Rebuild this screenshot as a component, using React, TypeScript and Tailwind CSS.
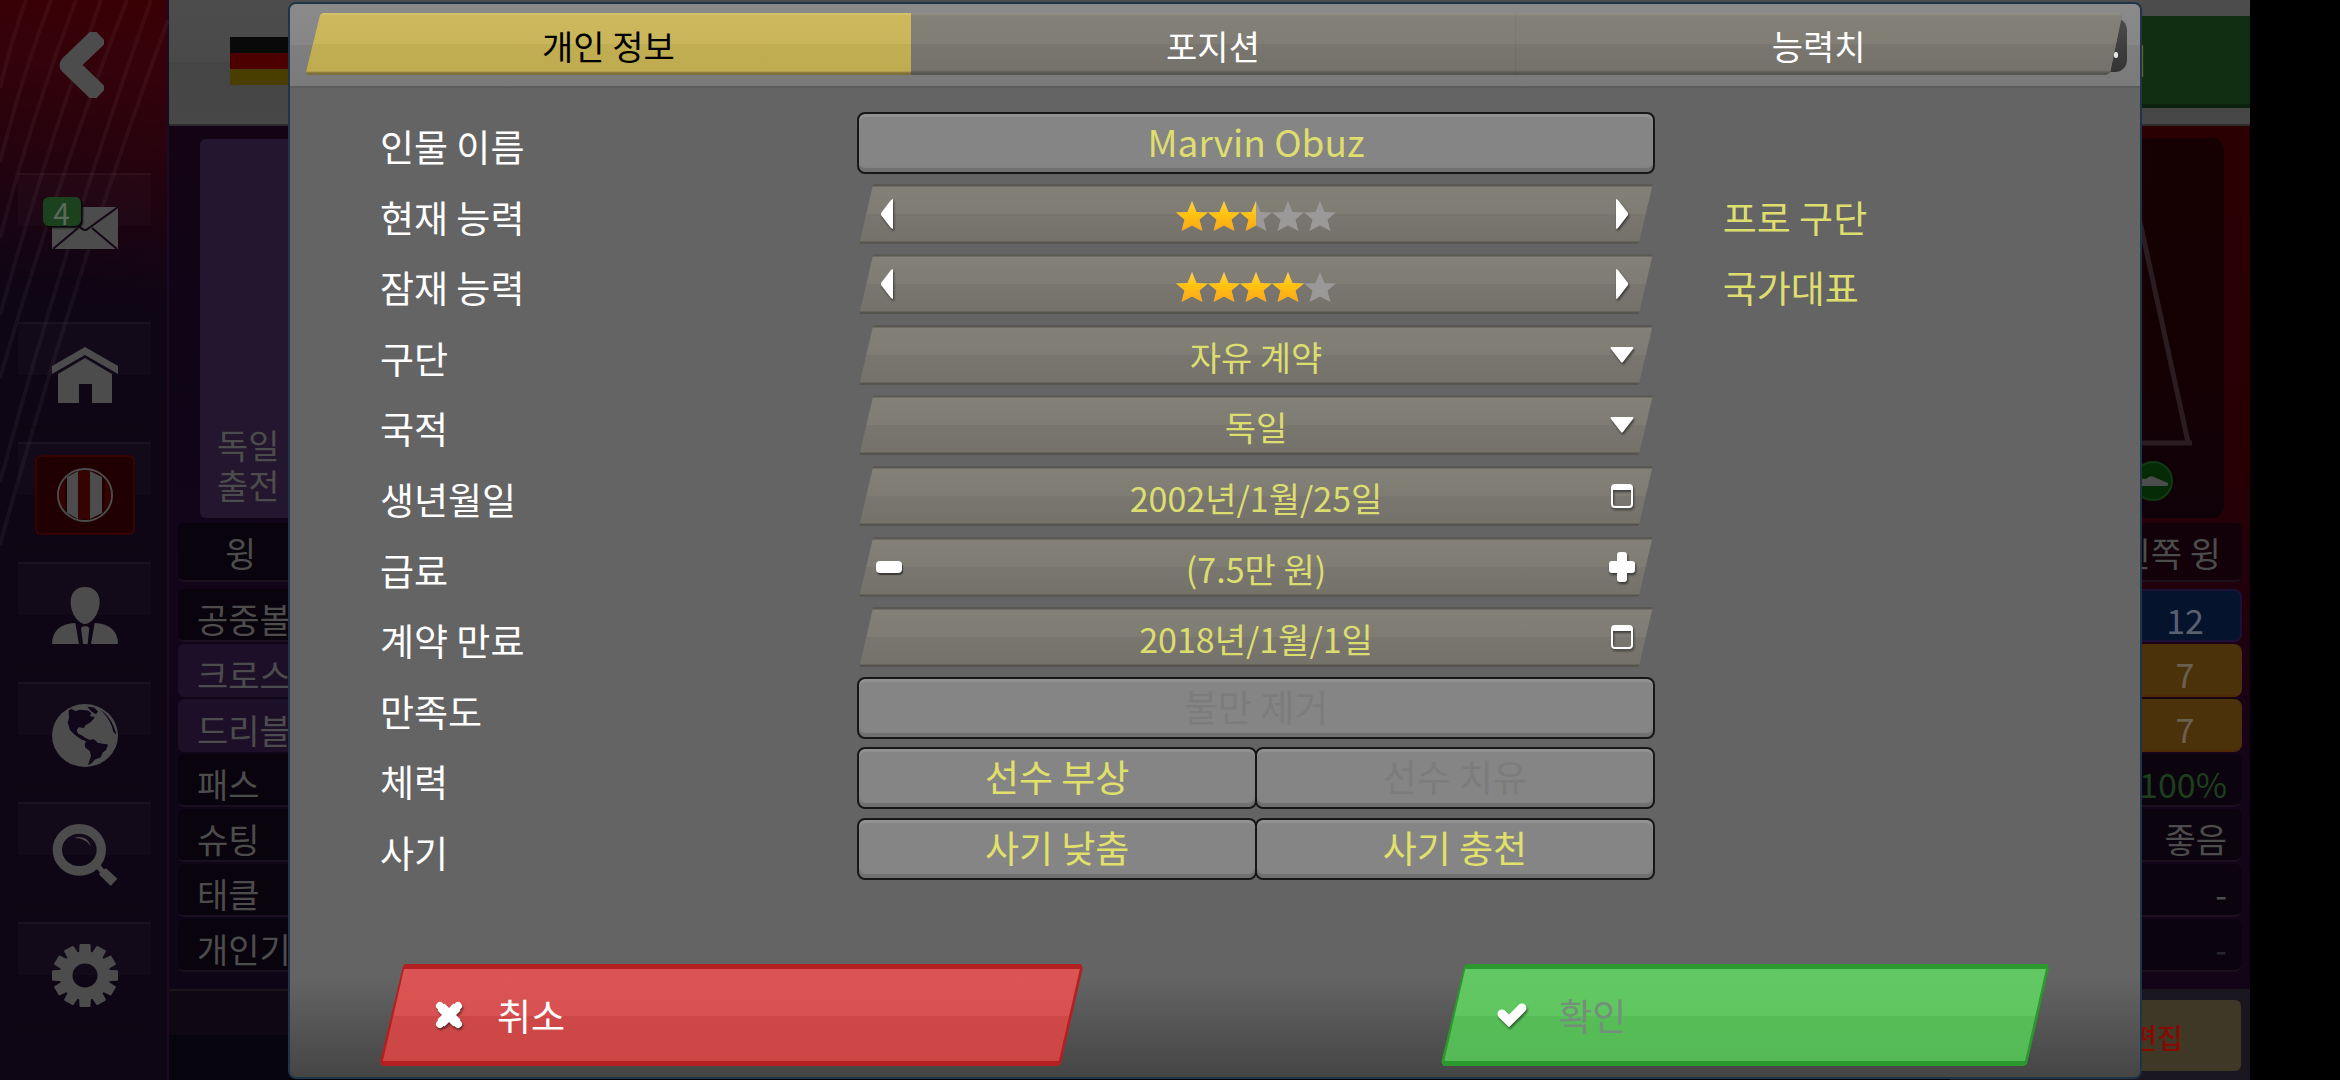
import React, { useId, useState } from "react";

const starPoints =
  "16,0 20.5,11 32,11.5 23.5,18.5 26.5,30 16,24.5 5.5,30 8.5,18.5 0,11.5 11.5,11";

/* ---------- sidebar icons ---------- */

function MailIcon() {
  return (
    <svg viewBox="0 0 66 42" className="h-[42px] w-[66px]" aria-hidden="true">
      <rect width="66" height="42" fill="#4c4c4c" />
      <path d="M0 0 L29 21 Q33 25 37 21 L66 0 M1 42 L26 21 M65 42 L40 21" fill="none" stroke="#150717" strokeWidth="2" />
    </svg>
  );
}

function HomeIcon() {
  return (
    <svg viewBox="0 0 66 56" className="h-[56px] w-[66px]" fill="#4c4c4c" aria-hidden="true">
      <path d="M33 0 L66 19 V27 L33 8 L0 27 V19 Z" />
      <path d="M33 11 L60 27 V56 H40 V37 H27 V56 H6 V27 Z" />
    </svg>
  );
}

function CrestIcon() {
  return (
    <span className="flex h-20 w-[100px] items-center justify-center rounded-md border-2 border-[#360303] bg-[#200000]">
      <svg viewBox="0 0 58 56" className="h-[56px] w-[58px]" aria-hidden="true">
        <ellipse cx="29" cy="28" rx="27" ry="26" fill="#200000" stroke="#4c4c4c" strokeWidth="2" />
        <rect x="22" y="4" width="12" height="48" fill="#360303" />
        <path d="M3 28 Q4 18 9 13 V43 Q4 38 3 28 M55 28 Q54 18 49 13 V43 Q54 38 55 28" fill="#360303" />
        <path d="M11 10 L22 4 V52 L11 46 Z M34 4 L46 10 V46 L34 52 Z" fill="#4c4c4c" />
      </svg>
    </span>
  );
}

function PersonIcon() {
  return (
    <svg viewBox="154 138 198 168" preserveAspectRatio="none" className="h-[57px] w-[66px]" fill="#4c4c4c" aria-hidden="true">
      <path d="M253 138 C281 138 298 156 297 184 C296 216 274 247 253 247 C233 247 210 216 210 184 C209 156 226 138 253 138 Z" />
      <path d="M154 306 C154 268 178 246 224 244 L235 306 Z" />
      <path d="M352 306 C352 268 328 246 282 244 L271 306 Z" />
      <path d="M241 258 L248 254 H259 L266 258 L261 306 H247 Z" />
    </svg>
  );
}

function GlobeIcon() {
  return (
    <svg viewBox="154 470 198 184" preserveAspectRatio="none" className="h-[63px] w-[66px]" aria-hidden="true">
      <ellipse cx="253" cy="562" rx="99" ry="92" fill="#4c4c4c" />
      <g fill="#10071a">
        <path d="M204 489 L212 484 L226 491 L236 487 L262 489 L272 497 L268 506 L283 508 L270 523 L254 532 L250 540 L234 538 L228 546 L232 556 L244 562 L256 570 L266 574 L258 580 L240 572 L222 560 L208 546 L201 524 L205 510 Z" />
        <path d="M260 576 L280 573 L292 584 L322 588 L316 604 L306 612 L300 626 L284 631 L272 644 L262 648 L266 636 L271 622 L268 608 L254 598 L252 586 Z" />
        <path d="M260 478 L280 480 L292 492 L286 500 L272 492 Z" />
        <path d="M298 486 C322 500 340 528 347 560 L338 552 C334 528 320 506 298 486 Z" />
      </g>
    </svg>
  );
}

function SearchIcon() {
  return (
    <svg viewBox="154 821 198 180" preserveAspectRatio="none" className="h-[62px] w-[66px]" aria-hidden="true">
      <ellipse cx="236" cy="896" rx="66" ry="61" fill="none" stroke="#4c4c4c" strokeWidth="28" />
      <path d="M288 952 L300 940 L309 952 L317 950 L350 980 L330 1001 L296 968 L297 960 Z" fill="#4c4c4c" />
      <path d="M220 862 C244 852 266 864 271 888 C262 872 246 862 220 862 Z" fill="#4c4c4c" />
    </svg>
  );
}

function GearIcon() {
  return (
    <svg viewBox="0 0 66 66" preserveAspectRatio="none" className="h-[63px] w-[66px]" aria-hidden="true">
      <circle cx="33" cy="33" r="19" fill="none" stroke="#4c4c4c" strokeWidth="13" />
      {[0, 30, 60, 90, 120, 150, 180, 210, 240, 270, 300, 330].map((a) => (
        <path key={a} d="M27 11 L27.500 1 Q27.500 0 28.500 0 H37.500 Q38.500 0 38.500 1 L39 11 Z" fill="#4c4c4c" transform={`rotate(${a} 33 33)`} />
      ))}
    </svg>
  );
}

function NavButton({ label, children }: { label: string; children: React.ReactNode }) {
  return (
    <button
      type="button"
      aria-label={label}
      className="flex h-[106px] w-full items-center justify-center border-t-2 border-b-2 border-t-white/5 border-b-black/30 bg-[linear-gradient(rgba(255,255,255,0.015)_50%,transparent_50%)]"
    >
      {children}
    </button>
  );
}

function Sidebar() {
  return (
    <nav
      aria-label="메뉴"
      className="relative flex w-[169px] shrink-0 flex-col border-r-2 border-[#1c0a24] bg-[linear-gradient(188deg,#3a0004_0%,#34020a_7%,#22030f_17%,#0e0515_28%,#0e0515_100%)] pr-4 pl-[18px]"
    >
      <svg viewBox="0 0 169 560" className="pointer-events-none absolute top-0 left-0 h-[560px] w-[169px]" fill="none" stroke="#ffffff" strokeOpacity="0.045" strokeWidth="4" aria-hidden="true">
        <path d="M26 0 Q12 38 0 88 M51 0 Q22 75 0 162 M76 0 Q32 115 0 238 M101 0 Q46 150 0 315 M127 0 Q64 160 0 378 M151 0 Q66 240 0 482 M168 20 Q76 270 0 545" />
      </svg>
      <button type="button" aria-label="뒤로" className="relative flex h-[173px] items-start justify-center pt-[32px] pr-[8px]">
        <svg viewBox="0 0 46 66" className="h-[66px] w-[46px]" aria-hidden="true">
          <path d="M35 10 L11 33 L35 56" fill="none" stroke="#4c4c4c" strokeWidth="19" strokeLinejoin="round" strokeLinecap="square" />
        </svg>
      </button>
      <div className="relative flex flex-col">
        <div className="mb-[43px]">
          <NavButton label="받은 편지함">
            <span className="relative block pt-[4px]">
              <MailIcon />
              <span className="absolute -top-[6px] -left-[9px] flex h-[29px] w-[38px] items-center justify-center rounded-md bg-[#1c421d] text-[30px] leading-none text-[#5a6a5a] shadow-[2px_2px_2px_#0a050c]">
                4
              </span>
            </span>
          </NavButton>
        </div>
        <div className="flex flex-col gap-[14px]">
          <NavButton label="홈"><HomeIcon /></NavButton>
          <NavButton label="구단"><CrestIcon /></NavButton>
          <NavButton label="감독"><PersonIcon /></NavButton>
          <NavButton label="세계"><GlobeIcon /></NavButton>
          <NavButton label="검색"><SearchIcon /></NavButton>
          <NavButton label="설정"><GearIcon /></NavButton>
        </div>
      </div>
    </nav>
  );
}

/* ---------- dimmed player page ---------- */

const attributes = [
  { name: "공중볼", marked: false },
  { name: "크로스", marked: true },
  { name: "드리블", marked: true },
  { name: "패스", marked: false },
  { name: "슈팅", marked: false },
  { name: "태클", marked: false },
  { name: "개인기", marked: false },
];

const plain = "justify-end border-b-2 border-[#1c101f] bg-[#0b030d] pr-[15px] text-[#4c4c4c]";
const values = [
  { text: "12", style: "justify-center border-2 border-[#1c1238] bg-[#06132c] text-[#5a6070]" },
  { text: "7", style: "justify-center border-b-2 border-[#4e2c08] bg-[#4b320b] text-[#6a6050]" },
  { text: "7", style: "justify-center border-b-2 border-[#4e2c08] bg-[#4b320b] text-[#6a6050]" },
  { text: "100%", style: "justify-end border-b-2 border-[#1c101f] bg-[#0b030d] pr-[15px] text-[#1c3f1c]" },
  { text: "좋음", style: plain },
  { text: "-", style: plain },
  { text: "-", style: "justify-end border-b-2 border-[#1c101f] bg-[#0b030d] pr-[15px] text-[#26262c]" },
];

function PlayerPage() {
  return (
    <div className="flex min-w-0 flex-1 flex-col text-[34px] leading-[40px]" aria-hidden="true">
      <header className="flex h-[126px] items-start justify-between border-b-2 border-[#2c2c2c] bg-[linear-gradient(#4c4c4c,#494949_50%,#454545_50%,#474747)]">
        <div className="mt-[37px] ml-[61px] flex h-12 w-[76px] flex-col">
          <span className="flex-1 bg-[#090909]" />
          <span className="flex-1 bg-[#4c0000]" />
          <span className="flex-1 bg-[#4a3d00]" />
        </div>
        <div className="mt-4 flex h-[92px] w-[200px] items-center border-b-4 border-[#0c220c] bg-[#122e12] pl-[66px] text-[#5a6a5a]">
          기
        </div>
      </header>

      <div className="flex flex-1 justify-between bg-[#0f0517]">
        <section className="flex w-[420px] flex-col bg-[linear-gradient(#140314,#0e0517_30%,#14041a_60%,#0e0517_70%)] pt-[13px] text-[#4c4c4c]">
          <div className="ml-[31px] flex h-[379px] flex-col justify-end rounded-md bg-[#24162e] pb-[13px] pl-[17px]">
            <p>
              독일
              <br />
              출전
            </p>
          </div>
          <div className="mt-[5px] ml-[9px] flex h-[59px] items-center rounded-md border-b-2 border-[#1c101f] bg-[#08030c] pt-[2px] pl-[47px]">
            윙
          </div>
          <ul className="mt-[7px] ml-[9px] flex flex-col gap-[2px]">
            {attributes.map((a) => (
              <li
                key={a.name}
                className={
                  a.marked
                    ? "flex h-[53px] items-center rounded-md bg-[#1e0f29] pt-2 pl-[19px]"
                    : "flex h-[53px] items-center rounded-md border-b-2 border-[#1a0f1e] bg-[#08030c] pt-2 pl-[19px]"
                }
              >
                {a.name}
              </li>
            ))}
          </ul>
        </section>

        <section className="flex w-[420px] flex-col items-end bg-[linear-gradient(#2b0003,#270004_40%,#20000d_55%,#14041a_75%,#130418)] pt-[12px] pr-2">
          <div className="mr-[18px] flex h-[380px] w-[360px] flex-col items-end justify-end rounded-xl bg-[linear-gradient(#150002,#140003_60%,#0f0108)]">
            <svg viewBox="0 0 160 300" className="mr-[32px] h-[300px] w-[160px]" fill="none" stroke="#2a1c20" strokeWidth="5" aria-hidden="true">
              <path d="M100 36 L156 293 M0 294 H160" transform="translate(0 -12)" />
            </svg>
            <svg viewBox="0 0 40 40" className="mr-[51px] mb-[17px] h-10 w-10" aria-hidden="true">
              <circle cx="20" cy="20" r="19" fill="#042b06" stroke="#123915" strokeWidth="2" />
              <path d="M3 17 L13 18 Q18 13 23 17 L35 22 Q36 25 33 25 H4 Z M25 25 v2 M29 25 v2" fill="#4c4c4c" />
            </svg>
          </div>
          <div className="mt-[5px] flex h-[59px] w-[300px] items-center justify-end rounded-md border-b-2 border-[#1c101f] bg-[#120108] pt-[2px] pr-[21px] text-[#4c4c4c]">
            왼쪽 윙
          </div>
          <ul className="mt-[7px] flex w-[114px] flex-col gap-[2px]">
            {values.map((v, i) => (
              <li key={i} className={"flex h-[53px] items-center rounded-lg pt-2 " + v.style}>
                {v.text}
              </li>
            ))}
          </ul>
        </section>
      </div>

      <footer className="flex h-[91px] justify-end border-t-2 border-[#1b161e] bg-[linear-gradient(#0f0812_50%,#06040c_50%)]">
        <div className="w-[300px] bg-[#1a1620] py-[9px] pr-[9px]">
          <div className="flex h-[71px] items-center justify-end rounded-md bg-[#3f3826] pt-[2px] pr-[58px] text-[28px] font-medium text-[#850c02]">
            편집
          </div>
        </div>
      </footer>
    </div>
  );
}

/* ---------- dialog controls ---------- */

function Bar({ children }: { children: React.ReactNode }) {
  return (
    <div className="relative mx-[2px] flex h-[60px] items-center justify-between bg-[linear-gradient(#5a5852_0,#5a5852_2px,#838078_3px,#7f7c74_50%,#797670_50%,#75726a_57px,#56544e_58px,#56544e_100%)] [clip-path:polygon(14px_0,100%_0,calc(100%-14px)_100%,0_100%)]">
      {children}
    </div>
  );
}

const shadowed = "drop-shadow-[1px_2px_1px_rgba(0,0,0,0.5)]";

function Arrow({ left }: { left?: boolean }) {
  return (
    <svg viewBox="0 0 12 30" className={"h-[30px] w-[12px] " + shadowed} fill="#fff" aria-hidden="true">
      <path d={left ? "M12 0 V30 L10 29 L0 16 V14 L10 1 Z" : "M0 0 V30 L2 29 L12 16 V14 L2 1 Z"} />
    </svg>
  );
}

function Stars({ value }: { value: number }) {
  const id = useId();
  return (
    <svg viewBox="0 0 160 30" className="h-[30px] w-[160px]" role="img" aria-label={`${value} / 5`}>
      <defs>
        <linearGradient id={id} x1="0" y1="0" x2="0" y2="1">
          <stop offset="0" stopColor="#ffd23a" />
          <stop offset="0.500" stopColor="#ffc010" />
          <stop offset="1" stopColor="#f9a61a" />
        </linearGradient>
        <clipPath id={id + "c"}>
          <rect width={value * 32} height="30" />
        </clipPath>
      </defs>
      {[0, 1, 2, 3, 4].map((i) => (
        <polygon key={i} points={starPoints} fill="#9b9997" transform={`translate(${i * 32} 0)`} />
      ))}
      <g clipPath={`url(#${id}c)`}>
        {[0, 1, 2, 3, 4].map((i) => (
          <polygon key={i} points={starPoints} fill={`url(#${id})`} transform={`translate(${i * 32} 0)`} />
        ))}
      </g>
    </svg>
  );
}

function Rating({ label, initial }: { label: string; initial: number }) {
  const [value, setValue] = useState(initial);
  return (
    <Bar>
      <button type="button" aria-label={label + " 감소"} onClick={() => setValue(Math.max(0, value - 0.5))} className="flex h-full w-[60px] items-center pl-[22px]">
        <Arrow left />
      </button>
      <div className="pt-[5px]">
        <Stars value={value} />
      </div>
      <button type="button" aria-label={label + " 증가"} onClick={() => setValue(Math.min(5, value + 0.5))} className="flex h-full w-[60px] items-center justify-end pr-[25px]">
        <Arrow />
      </button>
    </Bar>
  );
}

function Choice({ id, options }: { id: string; options: string[] }) {
  return (
    <Bar>
      <select id={id} className="h-full w-full cursor-pointer appearance-none bg-transparent px-[60px] pt-1 text-center text-[34px] leading-[50px] text-[#dcdd6f] outline-none">
        {options.map((o) => (
          <option key={o}>{o}</option>
        ))}
      </select>
      <svg viewBox="0 0 24 16" className={"pointer-events-none absolute top-[22px] right-[19px] h-[16px] w-[24px] " + shadowed} fill="#fff" aria-hidden="true">
        <path d="M1 0 H23 Q24 1 23 2 L13 15 Q12 16 11 15 L1 2 Q0 1 1 0 Z" />
      </svg>
    </Bar>
  );
}

function DateField({ id, value }: { id: string; value: string }) {
  return (
    <Bar>
      <button id={id} type="button" className="flex h-full w-full items-center justify-center pt-1 text-[34px] leading-[50px] text-[#dcdd6f]">
        {value}
      </button>
      <svg viewBox="0 0 22 24" className={"pointer-events-none absolute top-[18px] right-[20px] h-[24px] w-[22px] " + shadowed} aria-hidden="true">
        <rect x="1" y="1" width="20" height="22" rx="3" fill="none" stroke="#fff" strokeWidth="2" />
        <path d="M1 6 V3 Q1 1 3 1 H19 Q21 1 21 3 V6 Z" fill="#fff" />
      </svg>
    </Bar>
  );
}

const box =
  "h-[62px] rounded-lg border-2 border-[#171717] bg-[#858585] shadow-[inset_0_3px_1px_#929292,inset_0_-4px_1px_#707070] text-center text-[37px] leading-[50px]";

function PushButton({ children, disabled, grow }: { children: string; disabled?: boolean; grow?: string }) {
  return (
    <button
      type="button"
      disabled={disabled}
      className={box + " w-full min-w-0 flex-1 pb-1 " + (grow ?? "") + (disabled ? " text-[#7c7c7c]" : " text-[#e0e06a]")}
    >
      {children}
    </button>
  );
}

function Row({ label, htmlFor, note, children }: { label: string; htmlFor?: string; note?: string; children: React.ReactNode }) {
  const text = "pt-[6px] text-[37px] leading-[54px]";
  return (
    <div className="grid min-h-0 flex-1 grid-cols-[477fr_797fr_394fr] items-center">
      {htmlFor ? (
        <label htmlFor={htmlFor} className={text + " text-white"}>{label}</label>
      ) : (
        <span className={text + " text-white"}>{label}</span>
      )}
      <div>{children}</div>
      <span className={text + " pl-[68px] text-[#dede6e]"}>{note}</span>
    </div>
  );
}

function Tabs() {
  const [active, setActive] = useState(0);
  const tabs = ["개인 정보", "포지션", "능력치"];
  return (
    <div className="relative px-4 pt-[9px]">
      <div className="absolute top-[14px] right-[13px] h-[54px] w-[60px] rounded-xl bg-[linear-gradient(#4c4c4c,#333333)]" />
      <div
        role="tablist"
        className="relative mr-[2px] flex h-[62px] overflow-hidden bg-[#828078] [clip-path:polygon(14px_2px,17px_0,calc(100%-2px)_0,100%_2px,calc(100%-12px)_calc(100%-2px),calc(100%-16px)_100%,2px_100%,0_calc(100%-3px))]"
      >
        {tabs.map((t, i) => (
          <button
            key={t}
            type="button"
            role="tab"
            aria-selected={active === i}
            onClick={() => setActive(i)}
            className={
              "flex-1 pt-1 text-[34px] leading-[50px] " +
              (active === i
                ? "bg-[linear-gradient(#d6c46e_0,#cdb95c_3px,#cab65a_50%,#c1ae52_50%,#bfab50_58px,#7d7038_60px)] text-black"
                : "border-r border-black/5 bg-[linear-gradient(#928f87_0,#838078_4px,#807d75_50%,#797670_50%,#75726a_57px,#565550_60px)] text-white")
            }
          >
            {t}
          </button>
        ))}
      </div>
      <span className="absolute top-[48px] right-[22px] h-[6px] w-[4px] rounded-full bg-[#e8e8e8]" />
    </div>
  );
}

function ActionButton({ tone, label, textStyle, disabled, children }: { tone: "red" | "green"; label: string; textStyle: string; disabled?: boolean; children: React.ReactNode }) {
  const outer = tone === "red" ? "bg-[#b42022]" : "bg-[#2b992d]";
  const inner =
    tone === "red"
      ? "bg-[linear-gradient(#da5553,#d95152_51%,#ce4848_51%,#cd4646)]"
      : "bg-[linear-gradient(#62c863,#5fc660_51%,#56bd57_51%,#55ba55)]";
  return (
    <button
      type="button"
      disabled={disabled}
      className={
        "flex h-[102px] w-full px-[3px] py-[5px] [clip-path:polygon(23px_2px,25px_0,calc(100%-2px)_0,100%_4px,calc(100%-22px)_calc(100%-2px),calc(100%-25px)_100%,2px_100%,0_calc(100%-4px))] " + outer
      }
    >
      <span className={"flex h-full w-full items-center pl-[52px] [clip-path:polygon(21px_0,100%_0,calc(100%-21px)_100%,0_100%)] " + inner}>
        <span className="flex w-[32px] shrink-0">{children}</span>
        <span className={"pl-[30px] text-[37px] leading-[54px] " + textStyle}>{label}</span>
      </span>
    </button>
  );
}

function EditDialog() {
  const [name, setName] = useState("Marvin Obuz");
  const [salary, setSalary] = useState(75);
  return (
    <div
      role="dialog"
      aria-label="개인 정보"
      className="flex w-full flex-col overflow-hidden rounded-lg border-2 border-[#1d3547] bg-[linear-gradient(#646464_calc(100%-100px),#454545)]"
    >
      <div className="h-[84px] border-b-2 border-[#5c5c5c] bg-[linear-gradient(#8a8a8a,#868686_50%,#7f7f7f_50%,#7a7a7a)]">
        <Tabs />
      </div>
      <form className="flex flex-1 flex-col pr-[91px] pl-[90px]" onSubmit={(e) => e.preventDefault()}>
        <div className="flex flex-1 flex-col pt-5">
          <Row label="인물 이름" htmlFor="person-name">
            <input id="person-name" type="text" value={name} onChange={(e) => setName(e.target.value)} className={box + " block w-full pb-[5px] text-[#dede6e] outline-none"} />
          </Row>
          <Row label="현재 능력" note="프로 구단">
            <Rating label="현재 능력" initial={2.5} />
          </Row>
          <Row label="잠재 능력" note="국가대표">
            <Rating label="잠재 능력" initial={4} />
          </Row>
          <Row label="구단" htmlFor="club">
            <Choice id="club" options={["자유 계약"]} />
          </Row>
          <Row label="국적" htmlFor="nation">
            <Choice id="nation" options={["독일"]} />
          </Row>
          <Row label="생년월일" htmlFor="birth">
            <DateField id="birth" value="2002년/1월/25일" />
          </Row>
          <Row label="급료">
            <Bar>
              <button type="button" aria-label="급료 감소" onClick={() => setSalary(Math.max(0, salary - 5))} className="flex h-full w-[60px] items-center pl-[17px]">
                <span className="h-[12px] w-[26px] rounded-sm bg-white shadow-[1px_2px_1px_rgba(0,0,0,0.5)]" />
              </button>
              <output className="pt-1 text-[34px] leading-[50px] text-[#dcdd6f]">({salary / 10}만 원)</output>
              <button type="button" aria-label="급료 증가" onClick={() => setSalary(salary + 5)} className="flex h-full w-[60px] items-center justify-end pr-[18px]">
                <svg viewBox="0 0 26 30" className={"h-[30px] w-[26px] " + shadowed} fill="#fff" aria-hidden="true">
                  <rect x="8" y="0" width="10" height="30" rx="3" />
                  <rect x="0" y="9" width="26" height="12" rx="3" />
                </svg>
              </button>
            </Bar>
          </Row>
          <Row label="계약 만료" htmlFor="expiry">
            <DateField id="expiry" value="2018년/1월/1일" />
          </Row>
          <Row label="만족도">
            <div className="flex">
              <PushButton disabled>불만 제거</PushButton>
            </div>
          </Row>
          <Row label="체력">
            <div className="flex">
              <PushButton>선수 부상</PushButton>
              <PushButton disabled grow="-ml-[2px]">선수 치유</PushButton>
            </div>
          </Row>
          <Row label="사기">
            <div className="flex">
              <PushButton>사기 낮춤</PushButton>
              <PushButton grow="-ml-[2px]">사기 충천</PushButton>
            </div>
          </Row>
        </div>
        <div className="mt-20 mb-[11px] grid grid-cols-[702fr_358fr_607fr]">
          <ActionButton tone="red" label="취소" textStyle="text-white">
            <svg viewBox="0 0 28 28" className={"h-7 w-7 " + shadowed} aria-hidden="true">
              <path d="M6 6 L22 22 M22 6 L6 22" stroke="#fff" strokeWidth="10" strokeLinecap="butt" />
              <path d="M5 5 L23 23 M23 5 L5 23" stroke="#fff" strokeWidth="8" strokeLinecap="round" />
            </svg>
          </ActionButton>
          <span />
          <ActionButton tone="green" label="확인" textStyle="text-[#74907a]" disabled>
            <svg viewBox="0 0 32 26" className={"h-[26px] w-8 " + shadowed} aria-hidden="true">
              <path d="M6 12 L13 19 L26 6" fill="none" stroke="#fff" strokeWidth="9" strokeLinecap="round" strokeLinejoin="miter" />
            </svg>
          </ActionButton>
        </div>
      </form>
    </div>
  );
}

export default function App() {
  return (
    <div className="flex min-h-screen bg-black pr-[90px] font-['Noto_Sans_CJK_KR','Noto_Sans_CJK_SC',sans-serif]">
      <div className="relative flex flex-1 overflow-hidden">
        <Sidebar />
        <PlayerPage />
        <div className="absolute inset-0 flex pt-[2px] pr-[108px] pb-[1px] pl-[288px]">
          <EditDialog />
        </div>
      </div>
    </div>
  );
}
